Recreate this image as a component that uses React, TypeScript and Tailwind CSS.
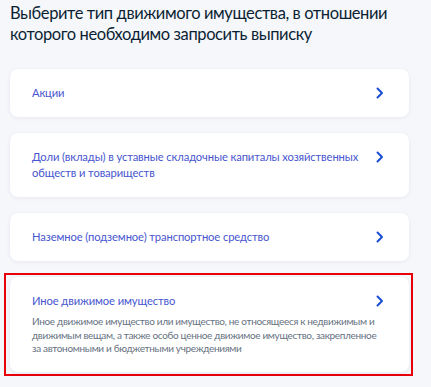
import React from 'react'

/* Выбор типа движимого имущества — список карточек */

interface OptionCardProps {
  title: string
  description?: string
}

function Chevron() {
  return (
    <svg width="8" height="12" viewBox="0 0 8 12" fill="none" className="shrink-0">
      <path d="M1.5 1.5L6 6L1.5 10.5" stroke="#1a4ed5" strokeWidth="2" strokeLinecap="round" strokeLinejoin="round" />
    </svg>
  )
}

function OptionCard({ title, description }: OptionCardProps) {
  return (
    <div className="bg-white rounded-[8px] shadow-[0_1px_4px_rgba(20,40,90,0.07)] pl-[22px] pr-[25px] py-4">
      <div className="flex items-start justify-between gap-2">
        <p className="text-[11.2px] leading-4 tracking-[-0.1px] text-[#4756cf]">{title}</p>
        <div className="h-4 flex items-center">
          <Chevron />
        </div>
      </div>
      {description && (
        <p className="mt-[6px] mr-[4px] text-[10px] leading-[13.5px] tracking-[-0.33px] text-[#66727f]">
          {description}
        </p>
      )}
    </div>
  )
}

export default function App() {
  return (
    <div
      className="min-h-screen w-[431px] bg-[#f6f7fb] pl-[10px] pr-[22px] pt-[3px]"
      style={{ fontFamily: 'Lato, "Noto Sans", sans-serif' }}
    >
      <h2 className="text-[16.5px] leading-[21px] tracking-[-0.4px] text-[#0b1f33]">
        Выберите тип движимого имущества, в отношении которого необходимо запросить выписку
      </h2>

      <div className="mt-6 flex flex-col gap-4">
        <OptionCard title="Акции" />
        <OptionCard title="Доли (вклады) в уставные складочные капиталы хозяйственных обществ и товариществ" />
        <OptionCard title="Наземное (подземное) транспортное средство" />
        <div className="-mt-1 ml-[-6px] mr-[-4px] border-2 border-[#e8000b] pl-[4px] pr-[2px] py-[2px]">
          <OptionCard
            title="Иное движимое имущество"
            description="Иное движимое имущество или имущество, не относящееся к недвижимым и движимым вещам, а также особо ценное движимое имущество, закрепленное за автономными и бюджетными учреждениями"
          />
        </div>
      </div>
    </div>
  )
}
